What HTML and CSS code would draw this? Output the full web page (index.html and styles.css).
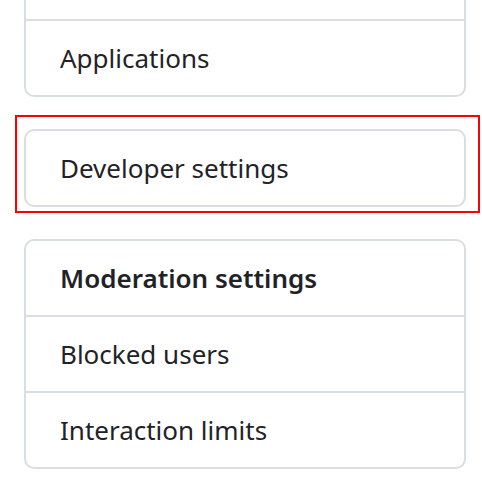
FILE: index.html
```html
<!DOCTYPE html>
<html lang="en">
<head>
    <meta charset="UTF-8">
    <meta name="viewport" content="width=device-width, initial-scale=1.0">
    <title>Settings</title>
    <link rel="stylesheet" href="styles.css">
</head>
<body>
    <nav class="sidebar">
        <div class="menu menu-top">
            <div class="menu-item"></div>
            <a class="menu-item" href="#">Applications</a>
        </div>

        <div class="highlight">
            <div class="menu">
                <a class="menu-item" href="#">Developer settings</a>
            </div>
        </div>

        <div class="menu menu-moderation">
            <div class="menu-item menu-heading">Moderation settings</div>
            <a class="menu-item" href="#">Blocked users</a>
            <a class="menu-item" href="#">Interaction limits</a>
        </div>
    </nav>
</body>
</html>
```

FILE: styles.css
```css
body {
    margin: 0;
    background-color: #ffffff;
    font-family: "Noto Sans", "Open Sans", sans-serif;
    color: #1f2328;
}
.sidebar {
    width: 442px;
    padding-left: 24px;
}
.menu {
    border: 2px solid #d8dee4;
    border-radius: 10px;
    background-color: #ffffff;
}
.menu-top {
    margin-top: -57px;
}
.menu-item {
    display: flex;
    align-items: center;
    height: 74px;
    padding-left: 34px;
    font-size: 26px;
    color: #1f2328;
    text-decoration: none;
    border-top: 2px solid #d8dee4;
}
.menu-item:first-child {
    border-top: none;
}
.menu-heading {
    font-weight: 600;
}
.highlight {
    margin: 18px -14px 0 -9px;
    padding: 12px 12px 4px 7px;
    border: 2px solid #ff0000;
}
.menu-moderation {
    margin-top: 26px;
}
```
